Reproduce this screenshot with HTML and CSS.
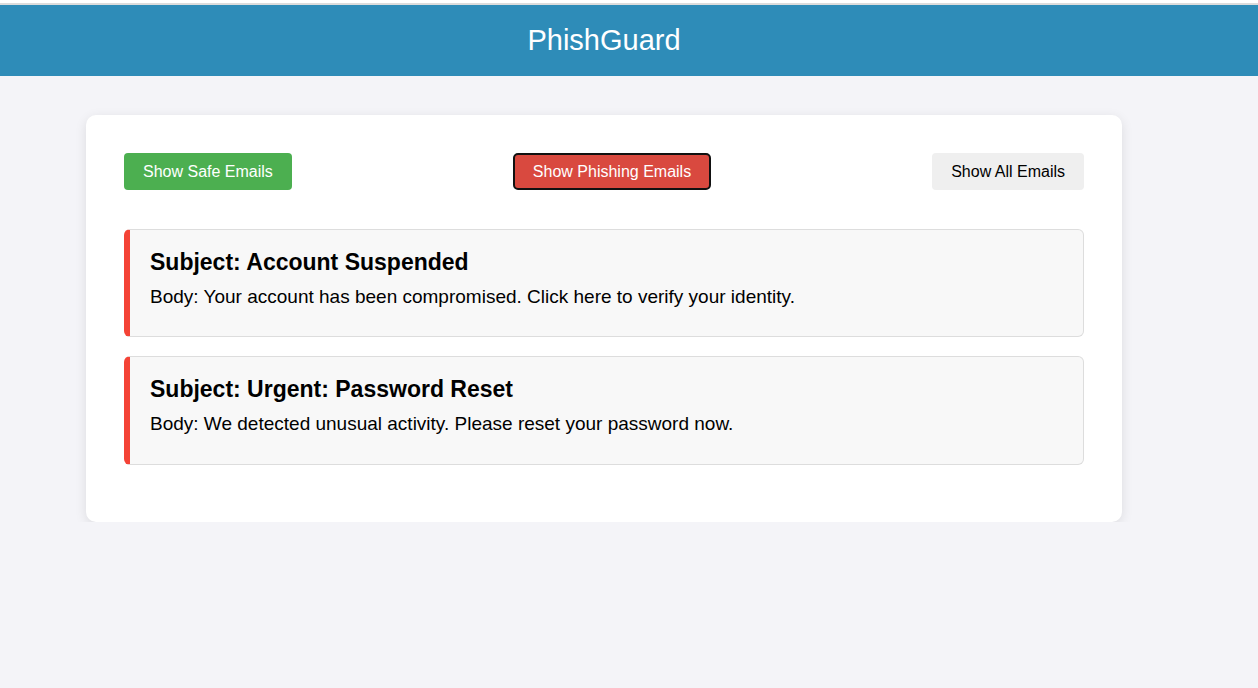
FILE: index.html
```html
<!DOCTYPE html>
<html lang="en">
<head>
<meta charset="utf-8">
<title>PhishGuard</title>
<link rel="stylesheet" href="styles.css">
</head>
<body>
<div class="topline"></div>
<header class="header">
  <div class="header-inner"><h1 class="title">PhishGuard</h1></div>
</header>
<main class="page">
  <section class="panel">
    <div class="controls">
      <button class="btn btn-safe">Show Safe Emails</button>
      <button class="btn btn-phish">Show Phishing Emails</button>
      <button class="btn btn-all">Show All Emails</button>
    </div>
    <div class="email phishing">
      <h3 class="subject">Subject: Account Suspended</h3>
      <p class="body-text">Body: Your account has been compromised. Click here to verify your identity.</p>
    </div>
    <div class="email phishing">
      <h3 class="subject">Subject: Urgent: Password Reset</h3>
      <p class="body-text">Body: We detected unusual activity. Please reset your password now.</p>
    </div>
  </section>
</main>
</body>
</html>
```
FILE: styles.css
```css
* { box-sizing: border-box; }
html, body {
  margin: 0;
  padding: 0;
  background: #f4f4f8;
  font-family: "Liberation Sans", Arial, sans-serif;
  color: #000;
}
.topline {
  height: 5px;
  background: #fff;
  border-bottom: 2px solid #dcdcdc;
}
.header {
  background: #2e8cb8;
  height: 71px;
  display: flex;
  align-items: center;
}
.header-inner {
  width: 1208px;
  text-align: center;
}
.title {
  margin: 0;
  color: #fff;
  font-weight: normal;
  font-size: 29px;
}
.page {
  width: 1208px;
  padding-top: 39px;
}
.panel {
  width: 1036px;
  margin: 0 auto;
  background: #fff;
  border-radius: 10px;
  padding: 38px 38px 38px;
  box-shadow: 0 3px 12px rgba(0, 0, 0, 0.1);
}
.controls {
  display: flex;
  justify-content: space-between;
  margin-bottom: 39px;
}
.btn {
  font-family: "Liberation Sans", Arial, sans-serif;
  font-size: 16px;
  height: 37px;
  padding: 0 19px;
  border: none;
  border-radius: 4px;
  cursor: pointer;
}
.btn-safe { background: #4caf50; color: #fff; }
.btn-phish {
  background: #d9493f;
  color: #fff;
  border: 2px solid #111;
  border-radius: 5px;
  padding: 0 18px;
}
.btn-all { background: #efefef; color: #000; }
.email {
  background: #f8f8f8;
  border: 1px solid #dddddd;
  border-left: 6px solid #f44336;
  border-radius: 6px;
  padding: 19px 20px 0;
  margin-bottom: 19px;
  height: 108px;
}
.email + .email { height: 109px; }
.subject {
  margin: 0 0 10px;
  font-size: 23px;
  font-weight: bold;
}
.body-text {
  margin: 0;
  font-size: 19px;
}
```
